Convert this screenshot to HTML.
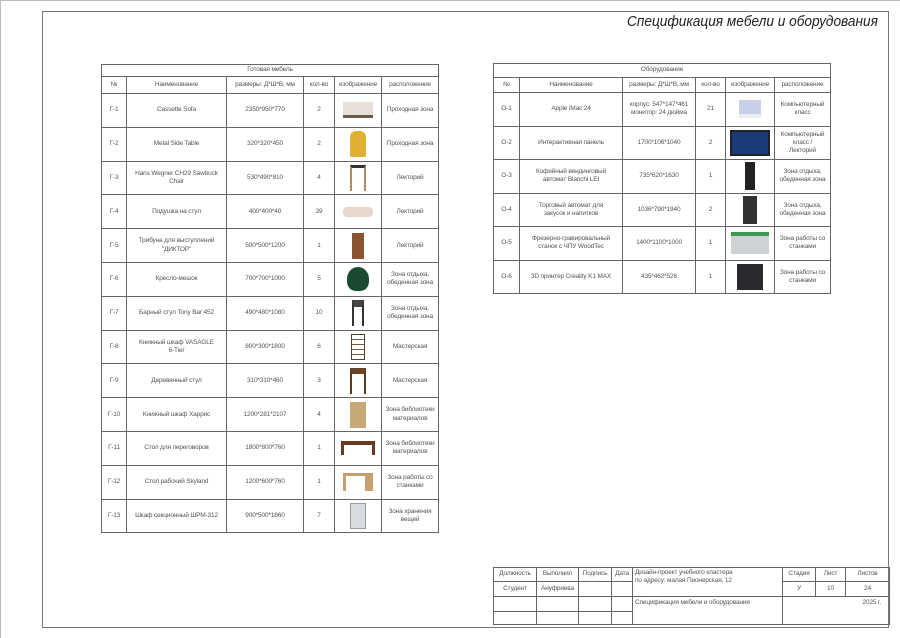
<!DOCTYPE html>
<html><head><meta charset="utf-8"><style>
body{margin:0;width:900px;height:638px;background:#fff;position:relative;overflow:hidden;font-family:"Liberation Sans","DejaVu Sans",sans-serif;color:#555}
.abs{position:absolute}
table{border-collapse:collapse;table-layout:fixed;position:absolute}
td{border:1px solid #666;font-size:6.5px;letter-spacing:-0.15px;text-align:center;vertical-align:middle;padding:0;line-height:1.25;overflow:hidden}
.im{display:inline-block;vertical-align:middle;box-sizing:border-box}
</style></head><body>
<div class="abs" style="left:0;top:0;width:900px;height:1px;background:#bbb"></div>
<div class="abs" style="left:0;top:0;width:1px;height:638px;background:#bbb"></div>
<div class="abs" style="left:42px;top:11px;width:845px;height:615px;border:1.5px solid #777"></div>
<div class="abs" style="left:627px;top:13px;font-size:15px;color:#222;font-style:italic;white-space:nowrap;transform:scaleX(0.91);transform-origin:0 0">Спецификация мебели и оборудования</div>

<table style="left:101px;top:64px;width:337px">
<colgroup><col style="width:25px"><col style="width:100px"><col style="width:77px"><col style="width:31px"><col style="width:47px"><col style="width:57px"></colgroup>
<tr style="height:12px"><td colspan="6">Готовая мебель</td></tr>
<tr style="height:17px"><td>№</td><td>Наименование</td><td>размеры: Д*Ш*В, мм</td><td>кол-во</td><td>изображение</td><td>расположение</td></tr>
<tr style="height:33.8px"><td>Г-1</td><td>Cassette Sofa</td><td>2350*950*770</td><td>2</td><td><span class="im" style="width:30px;height:16px;background:#e6e0d8;border-bottom:3px solid #6a5a4a"></span></td><td>Проходная зона</td></tr>
<tr style="height:33.8px"><td>Г-2</td><td>Metal Side Table</td><td>320*320*450</td><td>2</td><td><span class="im" style="width:16px;height:26px;background:#e0b030;border-radius:6px 6px 2px 2px"></span></td><td>Проходная зона</td></tr>
<tr style="height:33.8px"><td>Г-3</td><td>Hans Wegner CH29 Sawbuck Chair</td><td>530*490*810</td><td>4</td><td><span class="im" style="width:16px;height:26px;border-left:2px solid #b08a60;border-right:2px solid #b08a60;border-top:3px solid #333"></span></td><td>Лекторий</td></tr>
<tr style="height:33.8px"><td>Г-4</td><td>Подушка на стул</td><td>400*400*40</td><td>39</td><td><span class="im" style="width:30px;height:10px;background:#e8d8cc;border-radius:4px"></span></td><td>Лекторий</td></tr>
<tr style="height:33.8px"><td>Г-5</td><td>Трибуна для выступлений "ДИКТОР"</td><td>500*500*1200</td><td>1</td><td><span class="im" style="width:12px;height:26px;background:#8a5530"></span></td><td>Лекторий</td></tr>
<tr style="height:33.8px"><td>Г-6</td><td>Кресло-мешок</td><td>700*700*1000</td><td>5</td><td><span class="im" style="width:22px;height:24px;background:#1a4a30;border-radius:50% 50% 40% 40%"></span></td><td>Зона отдыха, обеденная зона</td></tr>
<tr style="height:33.8px"><td>Г-7</td><td>Барный стул Tony Bar 452</td><td>490*480*1080</td><td>10</td><td><span class="im" style="width:12px;height:26px;border-left:2px solid #333;border-right:2px solid #333;border-top:7px solid #444"></span></td><td>Зона отдыха, обеденная зона</td></tr>
<tr style="height:33.8px"><td>Г-8</td><td>Книжный шкаф VASAGLE<br>6-Tier</td><td>800*300*1800</td><td>6</td><td><span class="im" style="width:14px;height:26px;border:1px solid #5a4030;background:repeating-linear-gradient(#fff 0 4px,#7a5a40 4px 5px)"></span></td><td>Мастерская</td></tr>
<tr style="height:33.8px"><td>Г-9</td><td>Деревянный стул</td><td>310*310*460</td><td>3</td><td><span class="im" style="width:16px;height:26px;border-left:2px solid #5a3a20;border-right:2px solid #5a3a20;border-top:6px solid #6a4424"></span></td><td>Мастерская</td></tr>
<tr style="height:33.8px"><td>Г-10</td><td>Книжный шкаф Харрис</td><td>1200*281*2107</td><td>4</td><td><span class="im" style="width:16px;height:26px;background:#c9a878"></span></td><td>Зона библиотеки<br>материалов</td></tr>
<tr style="height:33.8px"><td>Г-11</td><td>Стол для переговоров</td><td>1800*800*760</td><td>1</td><td><span class="im" style="width:34px;height:14px;border-top:4px solid #6a3a20;border-left:3px solid #6a3a20;border-right:3px solid #6a3a20"></span></td><td>Зона библиотеки<br>материалов</td></tr>
<tr style="height:33.8px"><td>Г-12</td><td>Стол рабочий Skyland</td><td>1200*600*760</td><td>1</td><td><span class="im" style="width:30px;height:18px;border-top:3px solid #c8a070;border-left:3px solid #c8a070;border-right:8px solid #c8a070"></span></td><td>Зона работы со станками</td></tr>
<tr style="height:33.8px"><td>Г-13</td><td>Шкаф секционный ШРМ-312</td><td>900*500*1860</td><td>7</td><td><span class="im" style="width:16px;height:26px;background:#d8dce0;border:1px solid #999"></span></td><td>Зона хранения вещей</td></tr>
</table>

<table style="left:493px;top:63px;width:337px">
<colgroup><col style="width:26px"><col style="width:103px"><col style="width:73px"><col style="width:30px"><col style="width:49px"><col style="width:56px"></colgroup>
<tr style="height:14px"><td colspan="6">Оборудование</td></tr>
<tr style="height:15px"><td>№</td><td>Наименование</td><td>размеры: Д*Ш*В, мм</td><td>кол-во</td><td>изображение</td><td>расположение</td></tr>
<tr style="height:33.5px"><td>О-1</td><td>Apple iMac 24</td><td>корпус: 547*147*461 монитор: 24 дюйма</td><td>21</td><td><span class="im" style="width:22px;height:18px;background:#c8cfe8;border-bottom:4px solid #eee"></span></td><td>Компьютерный<br>класс</td></tr>
<tr style="height:33.5px"><td>О-2</td><td>Интерактивная панель</td><td>1700*106*1040</td><td>2</td><td><span class="im" style="width:40px;height:26px;background:#1a3a7a;border:2px solid #222"></span></td><td>Компьютерный<br>класс /<br>Лекторий</td></tr>
<tr style="height:33.5px"><td>О-3</td><td>Кофейный вендинговый<br>автомат Bianchi LEI</td><td>735*620*1630</td><td>1</td><td><span class="im" style="width:10px;height:28px;background:#222"></span></td><td>Зона отдыха, обеденная зона</td></tr>
<tr style="height:33.5px"><td>О-4</td><td>Торговый автомат для<br>закусок и напитков</td><td>1036*790*1940</td><td>2</td><td><span class="im" style="width:14px;height:28px;background:#333"></span></td><td>Зона отдыха, обеденная зона</td></tr>
<tr style="height:33.5px"><td>О-5</td><td>Фрезерно-гравировальный<br>станок с ЧПУ WoodTec</td><td>1400*1100*1000</td><td>1</td><td><span class="im" style="width:38px;height:22px;background:#cfd2d4;border-top:4px solid #3a9a50"></span></td><td>Зона работы со станками</td></tr>
<tr style="height:33.5px"><td>О-6</td><td>3D принтер Creality K1 MAX</td><td>435*462*526</td><td>1</td><td><span class="im" style="width:26px;height:26px;background:#2a2a2e"></span></td><td>Зона работы со станками</td></tr>
</table>

<table style="left:493px;top:567px;width:396px">
<colgroup><col style="width:43px"><col style="width:42px"><col style="width:33px"><col style="width:21px"><col style="width:150px"><col style="width:33px"><col style="width:30px"><col style="width:44px"></colgroup>
<tr style="height:14px"><td>Должность</td><td>Выполнил</td><td>Подпись</td><td>Дата</td><td rowspan="2" style="text-align:left;vertical-align:top;padding:1px 2px">Дизайн-проект учебного кластера<br>по адресу: малая Пионерская, 12</td><td>Стадия</td><td>Лист</td><td>Листов</td></tr>
<tr style="height:15px"><td>Студент</td><td>Ануфриева</td><td></td><td></td><td>У</td><td>10</td><td>24</td></tr>
<tr style="height:15px"><td></td><td></td><td></td><td></td><td rowspan="2" style="text-align:left;vertical-align:top;padding:2px">Спецификация мебели и оборудования</td><td colspan="3" rowspan="2" style="text-align:right;vertical-align:top;padding:2px 8px">2025 г.</td></tr>
<tr style="height:13px"><td></td><td></td><td></td><td></td></tr>
</table>
</body></html>
